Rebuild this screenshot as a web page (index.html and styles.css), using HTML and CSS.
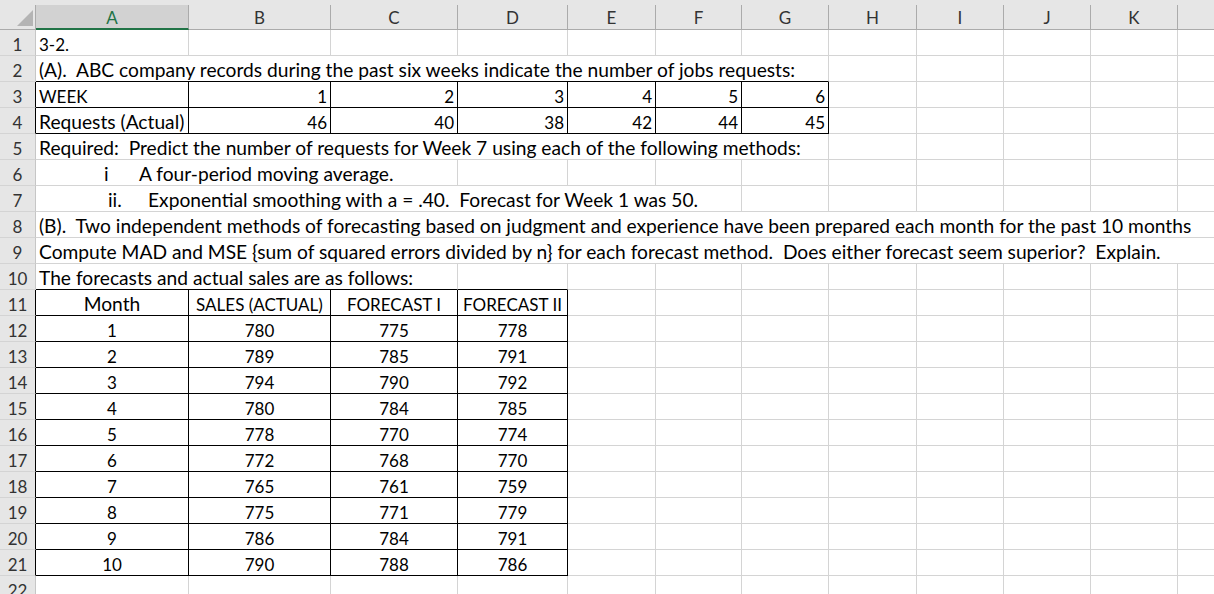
FILE: index.html
```html
<!DOCTYPE html>
<html>
<head>
  <meta charset="UTF-8">
  <title>3-2 Forecasting</title>
  <link rel="stylesheet" href="styles.css">
</head>
<body>
  <div class="sheet">
    <!-- column headers -->
    <div class="corner"><svg width="36" height="24" viewBox="0 0 36 24"><polygon points="33,5 33,21 17,21" fill="#b4b4b4"/></svg></div>
    <div class="hd sel">A</div>
    <div class="hd">B</div>
    <div class="hd">C</div>
    <div class="hd">D</div>
    <div class="hd">E</div>
    <div class="hd">F</div>
    <div class="hd">G</div>
    <div class="hd">H</div>
    <div class="hd">I</div>
    <div class="hd">J</div>
    <div class="hd">K</div>
    <div class="hd"></div>

    <!-- 1 -->
    <div class="rh">1</div>
    <div class="c">3-2.</div>
    <div class="c"></div><div class="c"></div><div class="c"></div><div class="c"></div><div class="c"></div><div class="c"></div>
    <div class="c"></div><div class="c"></div><div class="c"></div><div class="c"></div><div class="c"></div>

    <!-- 2 -->
    <div class="rh">2</div>
    <div class="c prose span7 bb">(A).  ABC company records during the past six weeks indicate the number of jobs requests:</div>
    <div class="c"></div><div class="c"></div><div class="c"></div><div class="c"></div><div class="c"></div>

    <!-- 3 -->
    <div class="rh edge">3</div>
    <div class="c bx">WEEK</div>
    <div class="c bx num">1</div>
    <div class="c bx num">2</div>
    <div class="c bx num">3</div>
    <div class="c bx num">4</div>
    <div class="c bx num">5</div>
    <div class="c bx num">6</div>
    <div class="c"></div><div class="c"></div><div class="c"></div><div class="c"></div><div class="c"></div>

    <!-- 4 -->
    <div class="rh edge">4</div>
    <div class="c prose bx">Requests (Actual)</div>
    <div class="c bx num">46</div>
    <div class="c bx num">40</div>
    <div class="c bx num">38</div>
    <div class="c bx num">42</div>
    <div class="c bx num">44</div>
    <div class="c bx num">45</div>
    <div class="c"></div><div class="c"></div><div class="c"></div><div class="c"></div><div class="c"></div>

    <!-- 5 -->
    <div class="rh">5</div>
    <div class="c prose span7">Required:  Predict the number of requests for Week 7 using each of the following methods:</div>
    <div class="c"></div><div class="c"></div><div class="c"></div><div class="c"></div><div class="c"></div>

    <!-- 6 -->
    <div class="rh">6</div>
    <div class="c prose span3 item-i"><span class="mark">i</span>A four-period moving average.</div>
    <div class="c"></div><div class="c"></div><div class="c"></div><div class="c"></div><div class="c"></div>
    <div class="c"></div><div class="c"></div><div class="c"></div><div class="c"></div>

    <!-- 7 -->
    <div class="rh">7</div>
    <div class="c prose span6 item-ii"><span class="mark">ii.</span>Exponential smoothing with a = .40.  Forecast for Week 1 was 50.</div>
    <div class="c"></div><div class="c"></div><div class="c"></div><div class="c"></div><div class="c"></div><div class="c"></div>

    <!-- 8 -->
    <div class="rh">8</div>
    <div class="c prose span12">(B).  Two independent methods of forecasting based on judgment and experience have been prepared each month for the past 10 months</div>

    <!-- 9 -->
    <div class="rh">9</div>
    <div class="c prose span12">Compute MAD and MSE {sum of squared errors divided by n} for each forecast method.  Does either forecast seem superior?  Explain.</div>

    <!-- 10 -->
    <div class="rh">10</div>
    <div class="c prose span3 bb">The forecasts and actual sales are as follows:</div>
    <div class="c bb"></div>
    <div class="c"></div><div class="c"></div><div class="c"></div><div class="c"></div>
    <div class="c"></div><div class="c"></div><div class="c"></div><div class="c"></div>

    <!-- 11 -->
    <div class="rh edge">11</div>
    <div class="c prose bx mid">Month</div>
    <div class="c bx mid">SALES (ACTUAL)</div>
    <div class="c bx mid">FORECAST I</div>
    <div class="c bx mid">FORECAST II</div>
    <div class="c"></div><div class="c"></div><div class="c"></div><div class="c"></div>
    <div class="c"></div><div class="c"></div><div class="c"></div><div class="c"></div>

    <!-- 12 -->
    <div class="rh edge">12</div>
    <div class="c bx mid">1</div><div class="c bx mid">780</div><div class="c bx mid">775</div><div class="c bx mid">778</div>
    <div class="c"></div><div class="c"></div><div class="c"></div><div class="c"></div>
    <div class="c"></div><div class="c"></div><div class="c"></div><div class="c"></div>

    <!-- 13 -->
    <div class="rh edge">13</div>
    <div class="c bx mid">2</div><div class="c bx mid">789</div><div class="c bx mid">785</div><div class="c bx mid">791</div>
    <div class="c"></div><div class="c"></div><div class="c"></div><div class="c"></div>
    <div class="c"></div><div class="c"></div><div class="c"></div><div class="c"></div>

    <!-- 14 -->
    <div class="rh edge">14</div>
    <div class="c bx mid">3</div><div class="c bx mid">794</div><div class="c bx mid">790</div><div class="c bx mid">792</div>
    <div class="c"></div><div class="c"></div><div class="c"></div><div class="c"></div>
    <div class="c"></div><div class="c"></div><div class="c"></div><div class="c"></div>

    <!-- 15 -->
    <div class="rh edge">15</div>
    <div class="c bx mid">4</div><div class="c bx mid">780</div><div class="c bx mid">784</div><div class="c bx mid">785</div>
    <div class="c"></div><div class="c"></div><div class="c"></div><div class="c"></div>
    <div class="c"></div><div class="c"></div><div class="c"></div><div class="c"></div>

    <!-- 16 -->
    <div class="rh edge">16</div>
    <div class="c bx mid">5</div><div class="c bx mid">778</div><div class="c bx mid">770</div><div class="c bx mid">774</div>
    <div class="c"></div><div class="c"></div><div class="c"></div><div class="c"></div>
    <div class="c"></div><div class="c"></div><div class="c"></div><div class="c"></div>

    <!-- 17 -->
    <div class="rh edge">17</div>
    <div class="c bx mid">6</div><div class="c bx mid">772</div><div class="c bx mid">768</div><div class="c bx mid">770</div>
    <div class="c"></div><div class="c"></div><div class="c"></div><div class="c"></div>
    <div class="c"></div><div class="c"></div><div class="c"></div><div class="c"></div>

    <!-- 18 -->
    <div class="rh edge">18</div>
    <div class="c bx mid">7</div><div class="c bx mid">765</div><div class="c bx mid">761</div><div class="c bx mid">759</div>
    <div class="c"></div><div class="c"></div><div class="c"></div><div class="c"></div>
    <div class="c"></div><div class="c"></div><div class="c"></div><div class="c"></div>

    <!-- 19 -->
    <div class="rh edge">19</div>
    <div class="c bx mid">8</div><div class="c bx mid">775</div><div class="c bx mid">771</div><div class="c bx mid">779</div>
    <div class="c"></div><div class="c"></div><div class="c"></div><div class="c"></div>
    <div class="c"></div><div class="c"></div><div class="c"></div><div class="c"></div>

    <!-- 20 -->
    <div class="rh edge">20</div>
    <div class="c bx mid">9</div><div class="c bx mid">786</div><div class="c bx mid">784</div><div class="c bx mid">791</div>
    <div class="c"></div><div class="c"></div><div class="c"></div><div class="c"></div>
    <div class="c"></div><div class="c"></div><div class="c"></div><div class="c"></div>

    <!-- 21 -->
    <div class="rh edge">21</div>
    <div class="c bx mid">10</div><div class="c bx mid">790</div><div class="c bx mid">788</div><div class="c bx mid">786</div>
    <div class="c"></div><div class="c"></div><div class="c"></div><div class="c"></div>
    <div class="c"></div><div class="c"></div><div class="c"></div><div class="c"></div>

    <!-- 22 -->
    <div class="rh">22</div>
    <div class="c"></div><div class="c"></div><div class="c"></div><div class="c"></div>
    <div class="c"></div><div class="c"></div><div class="c"></div><div class="c"></div>
    <div class="c"></div><div class="c"></div><div class="c"></div><div class="c"></div>
  </div>
</body>
</html>
```

FILE: styles.css
```css
body {
  margin: 0;
  font-family: Lato, "Liberation Sans", sans-serif;
  font-size: 17px;
  background: #fff;
  overflow: hidden;
}

.sheet {
  display: grid;
  grid-template-columns: 36px 153px 142px 127px 110px 88px 86px 87px 88px 87px 87px 87px 87px;
  grid-template-rows: 25px;
  grid-auto-rows: 26px;
  width: max-content;
  padding-top: 5px;
  background: #e6e6e6;
}

.sheet > div {
  box-sizing: border-box;
  white-space: pre;
  line-height: 21px;
}

/* headers */
.corner {
  border-right: 1px solid #ababab;
  border-bottom: 1px solid #ababab;
}
.corner svg {
  display: block;
}

.hd {
  background: #e6e6e6;
  color: #333;
  text-align: center;
  padding-top: 2px;
  border-right: 1px solid #ababab;
  border-bottom: 1px solid #ababab;
}
.hd.sel {
  background: #d2d2d2;
  color: #217346;
  border-bottom: 2px solid #217346;
}

.rh {
  background: #e6e6e6;
  color: #333;
  text-align: center;
  padding-top: 4px;
  border-right: 1px solid #c6c6c6;
  border-bottom: 1px solid #d4d4d4;
}
.rh.edge {
  border-right-color: #000;
}

/* cells */
.c {
  background: #fff;
  color: #000;
  padding: 4px 3px 0;
  border-right: 1px solid #d4d4d4;
  border-bottom: 1px solid #d4d4d4;
}
.c.prose {
  font-size: 19.2px;
  padding-top: 3px;
}
.c.num { text-align: right; }
.c.mid { text-align: center; }
.c.bx {
  border-right-color: #000;
  border-bottom-color: #000;
}
.c.bb { border-bottom-color: #000; }

.span3 { grid-column: span 3; }
.span6 { grid-column: span 6; }
.span7 { grid-column: span 7; }
.span12 { grid-column: span 12; }

/* numbered sub items in rows 6 and 7 */
.mark { display: inline-block; }
.item-i { padding-left: 68px; }
.item-i .mark { width: 35px; }
.item-ii { padding-left: 72px; }
.item-ii .mark { width: 40px; }
```
